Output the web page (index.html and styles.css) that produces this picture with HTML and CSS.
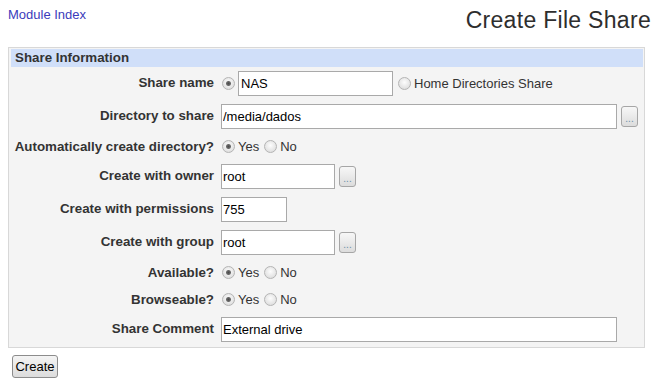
FILE: index.html
```html
<html>
<head>
	<title>Create File Share</title>
	<link rel="stylesheet" href="styles.css">
</head>
<body>
<div class="top">
	<a href="#" class="index">Module Index</a>
	<h1>Create File Share</h1>
</div>
<form>
<div class="box">
	<div class="head">Share Information</div>

	<div class="row">
		<div class="lbl">Share name</div>
		<div class="val">
			<input type="radio" name="home" class="lead" checked>
			<input type="text" class="txt w-name" value="NAS">
			<label class="opt"><input type="radio" name="home">Home Directories Share</label>
		</div>
	</div>

	<div class="row">
		<div class="lbl">Directory to share</div>
		<div class="val">
			<input type="text" class="txt w-long" value="/media/dados">
			<button type="button" class="pick">...</button>
		</div>
	</div>

	<div class="row short">
		<div class="lbl">Automatically create directory?</div>
		<div class="val">
			<label class="opt"><input type="radio" name="mkdir" checked>Yes</label>
			<label class="opt"><input type="radio" name="mkdir">No</label>
		</div>
	</div>

	<div class="row">
		<div class="lbl">Create with owner</div>
		<div class="val">
			<input type="text" class="txt w-user" value="root">
			<button type="button" class="pick">...</button>
		</div>
	</div>

	<div class="row">
		<div class="lbl">Create with permissions</div>
		<div class="val">
			<input type="text" class="txt w-perm" value="755">
		</div>
	</div>

	<div class="row">
		<div class="lbl">Create with group</div>
		<div class="val">
			<input type="text" class="txt w-user" value="root">
			<button type="button" class="pick">...</button>
		</div>
	</div>

	<div class="row short">
		<div class="lbl">Available?</div>
		<div class="val">
			<label class="opt"><input type="radio" name="avail" checked>Yes</label>
			<label class="opt"><input type="radio" name="avail">No</label>
		</div>
	</div>

	<div class="row short">
		<div class="lbl">Browseable?</div>
		<div class="val">
			<label class="opt"><input type="radio" name="browse" checked>Yes</label>
			<label class="opt"><input type="radio" name="browse">No</label>
		</div>
	</div>

	<div class="row">
		<div class="lbl">Share Comment</div>
		<div class="val">
			<input type="text" class="txt w-long" value="External drive">
		</div>
	</div>
</div>
<input type="submit" class="create" value="Create">
</form>
</body>
</html>
```

FILE: styles.css
```css
body {
	margin:8px;
	font-family:"Liberation Sans", Arial, sans-serif;
	font-size:13px;
	color:#333;
}
.top {
	display:flex;
	justify-content:space-between;
	align-items:flex-start;
	height:25px;
}
.index {
	color:#3b3bbb;
	text-decoration:none;
	line-height:13px;
}
h1 {
	margin:0;
	font-size:23px;
	letter-spacing:0.3px;
	font-weight:normal;
	line-height:25px;
	color:#2e2e2e;
}
form {
	margin:0;
}
.box {
	margin-top:14px;
	width:637px;
	box-sizing:border-box;
	border:1px solid #d8d8d8;
	padding:1px 1px 1px 2px;
	background:#f4f4f4;
}
.head {
	background:#d0dff9;
	height:18px;
	line-height:18px;
	padding-left:4px;
	font-weight:bold;
	font-size:13.33px;
}
.row {
	display:grid;
	grid-template-columns:208px 1fr;
	height:33px;
}
.row.short {
	height:27px;
}
.lbl {
	align-self:center;
	text-align:right;
	padding-right:5px;
	font-weight:bold;
	font-size:13.33px;
	margin-top:-3px;
}
.short .lbl {
	margin-top:0;
}
.val {
	display:flex;
	align-items:center;
	padding-left:2px;
}
.txt {
	height:25px;
	box-sizing:border-box;
	border:1px solid #a9a9a9;
	padding:0 2px 0 1px;
	font-family:"Liberation Sans", Arial, sans-serif;
	font-size:13px;
	color:#000;
	background:#fff;
	margin:0 4px 0 0;
}
.w-name { width:155px; padding-left:2px; }
.w-long { width:396px; }
.w-user { width:114px; }
.w-perm { width:66px; }
input[type=radio] {
	appearance:none;
	-webkit-appearance:none;
	width:13px;
	height:13px;
	margin:0 3px 0 1px;
	border:1px solid #b4b4b4;
	border-radius:50%;
	background:radial-gradient(circle at 50% 40%, #fdfdfd, #d6d6d6);
	box-sizing:border-box;
}
input[type=radio]:checked {
	background:radial-gradient(circle, #4a4a4a 0, #6a6a6a 2px, transparent 3px),
		radial-gradient(circle at 50% 40%, #fdfdfd, #d6d6d6);
}
input.lead {
	margin-right:3px;
}
.opt {
	display:inline-flex;
	align-items:center;
}
.opt + .opt {
	margin-left:4px;
}
.pick {
	width:17px;
	height:21px;
	padding:4px 0 0 0;
	border:1px solid #a6a6a6;
	border-radius:3px;
	background:linear-gradient(#f7f7f7, #dcdcdc);
	font-size:10px;
	line-height:10px;
	color:#6b8fa8;
	letter-spacing:0;
}
.create {
	margin:7px 0 0 4px;
	width:46px;
	height:23px;
	padding:0;
	border:1px solid #8c8c8c;
	border-radius:3px;
	background:linear-gradient(#f4f4f4, #dcdcdc);
	font-family:"Liberation Sans", Arial, sans-serif;
	font-size:13px;
	color:#000;
}
```
